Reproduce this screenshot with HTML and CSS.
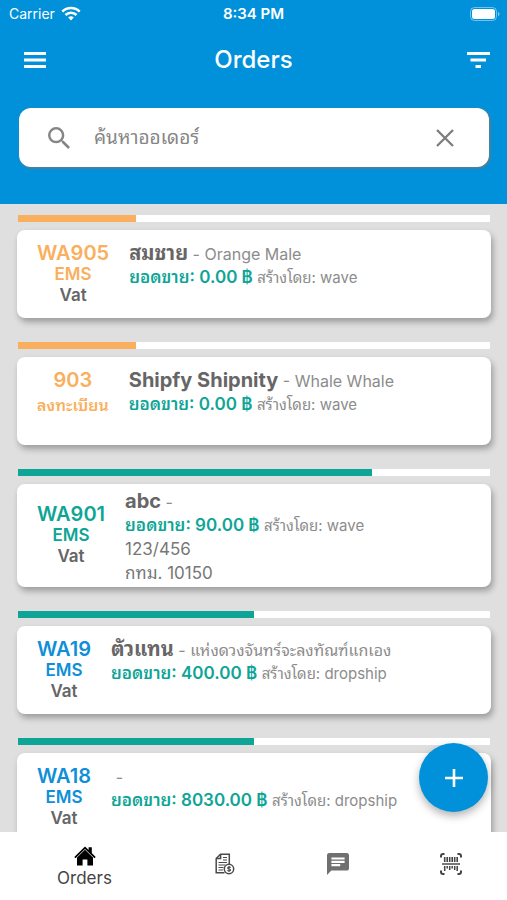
FILE: index.html
```html
<!DOCTYPE html>
<html lang="th">
<head>
<meta charset="utf-8">
<meta name="viewport" content="width=device-width, initial-scale=1">
<title>Orders</title>
<link rel="stylesheet" href="styles.css">
</head>
<body>
<div class="app">
  <header class="header">
    <div class="status">
      <div class="carrier">
        <span>Carrier</span>
        <svg width="20" height="15" viewBox="0 0 20 15" fill="none" stroke="#fff" stroke-width="2.6"><path d="M1.3 5.6a12.3 12.3 0 0 1 17.4 0"/><path d="M4.5 9a7.8 7.8 0 0 1 11 0"/><path d="M10 14.6 7.2 11.6a4 4 0 0 1 5.6 0z" fill="#fff" stroke="none"/></svg>
      </div>
      <span class="time">8:34 PM</span>
      <svg class="battery" width="30" height="14" viewBox="0 0 30 14"><rect x=".5" y=".5" width="26" height="13" rx="4" fill="none" stroke="#fff" stroke-opacity=".45"/><rect x="2" y="2" width="23" height="10" rx="2.5" fill="#fff"/><path d="M28 4.8c2 .8 2 3.600 0 4.400z" fill="#fff" fill-opacity=".5"/></svg>
    </div>
    <div class="bar">
      <button class="icon-btn menu" type="button" aria-label="Menu">
        <svg width="24" height="16" viewBox="0 0 24 16" fill="#fff"><path d="M1 0h22v3H1zM1 6.500h22v3H1zM1 13h22v3H1z"/></svg>
      </button>
      <h1 class="title">Orders</h1>
      <button class="icon-btn filter" type="button" aria-label="Filter">
        <svg width="24" height="16" viewBox="0 0 24 16" fill="#fff"><path d="M1 0h23v3H1zM4.500 6.500h15.500v3H4.500zM9.500 13h5.500v3H9.500z"/></svg>
      </button>
    </div>
    <form class="search" role="search">
      <svg width="22" height="22" viewBox="3 3 17.500 17.500" fill="#858585"><path d="M15.500 14h-.79l-.28-.27A6.470 6.470 0 0 0 16 9.500 6.500 6.500 0 1 0 9.500 16c1.610 0 3.090-.59 4.230-1.570l.27.28v.79l5 4.990L20.490 19l-4.990-5zm-6 0C7.010 14 5 11.990 5 9.500S7.010 5 9.500 5 14 7.010 14 9.500 11.990 14 9.500 14z"/></svg>
      <input class="search-input" type="text" aria-label="ค้นหาออเดอร์" placeholder="ค้นหาออเดอร์">
      <button class="icon-btn" type="reset" aria-label="Clear">
        <svg width="18" height="18" viewBox="0 0 18 18" fill="none" stroke="#7d7d7d" stroke-width="2.300"><path d="M1 1l16 16M17 1 1 17"/></svg>
      </button>
    </form>
  </header>

  <main class="content">
    <div class="list">
      <article class="order orange">
        <div class="track"><div class="fill" style="width:25%"></div></div>
        <div class="card">
          <div class="tag"><div class="code">WA905</div><div class="ship">EMS</div><div class="vat">Vat</div></div>
          <div class="info">
            <div class="line"><span class="name">สมชาย</span> <span class="alias">- Orange Male</span></div>
            <div class="line"><span class="sales">ยอดขาย: 0.00 ฿</span> <span class="by">สร้างโดย: wave</span></div>
          </div>
        </div>
      </article>
      <article class="order orange">
        <div class="track"><div class="fill" style="width:25%"></div></div>
        <div class="card">
          <div class="tag"><div class="code">903</div><div class="ship thai">ลงทะเบียน</div></div>
          <div class="info">
            <div class="line"><span class="name">Shipfy Shipnity</span> <span class="alias">- Whale Whale</span></div>
            <div class="line"><span class="sales">ยอดขาย: 0.00 ฿</span> <span class="by">สร้างโดย: wave</span></div>
          </div>
        </div>
      </article>
      <article class="order green">
        <div class="track"><div class="fill" style="width:75%"></div></div>
        <div class="card">
          <div class="tag"><div class="code">WA901</div><div class="ship">EMS</div><div class="vat">Vat</div></div>
          <div class="info">
            <div class="line"><span class="name">abc</span> <span class="alias">-</span></div>
            <div class="line"><span class="sales">ยอดขาย: 90.00 ฿</span> <span class="by">สร้างโดย: wave</span></div>
            <div class="line address">123/456</div>
            <div class="line address">กทม. 10150</div>
          </div>
        </div>
      </article>
      <article class="order blue">
        <div class="track"><div class="fill" style="width:50%"></div></div>
        <div class="card">
          <div class="tag"><div class="code">WA19</div><div class="ship">EMS</div><div class="vat">Vat</div></div>
          <div class="info">
            <div class="line"><span class="name">ตัวแทน</span> <span class="alias">- แห่งดวงจันทร์จะลงทัณฑ์แกเอง</span></div>
            <div class="line"><span class="sales">ยอดขาย: 400.00 ฿</span> <span class="by">สร้างโดย: dropship</span></div>
          </div>
        </div>
      </article>
      <article class="order blue">
        <div class="track"><div class="fill" style="width:50%"></div></div>
        <div class="card">
          <div class="tag"><div class="code">WA18</div><div class="ship">EMS</div><div class="vat">Vat</div></div>
          <div class="info">
            <div class="line"><span class="name">&nbsp;</span><span class="alias">-</span></div>
            <div class="line"><span class="sales">ยอดขาย: 8030.00 ฿</span> <span class="by">สร้างโดย: dropship</span></div>
          </div>
        </div>
      </article>
    </div>
    <button class="fab" type="button" aria-label="Add order">
      <svg width="18" height="18" viewBox="0 0 18 18" fill="#fff"><path d="M7.700 0h2.600v7.700H18v2.600h-7.700V18H7.700v-7.700H0V7.700h7.700z"/></svg>
    </button>
  </main>

  <nav class="nav">
    <a class="tab active" href="#orders">
      <svg width="22" height="20" viewBox="0 0 22 20" fill="#000"><path d="M11 .5 14.600 4V1.300h3.200v5.800L21.700 11l-1.200 1.200L11 3 1.500 12.200.3 11z"/><path d="M11 3.800 19 11.600v7.900h-5.600v-6H8.600v6H3v-7.900z"/></svg>
      <span>Orders</span>
    </a>
    <a class="tab" href="#bills" aria-label="Bills">
      <svg width="20" height="22" viewBox="0 0 20 22" fill="none" stroke="#4a4a4a" stroke-width="1.500"><path d="M9.500 19.800H1.200V5.500L5.500 1.200h8.800v10"/><path d="M5.600 1.200v4.400H1.200"/><path d="M8 4.500h4M8 7h4M3.500 9.500h8.500M3.500 12h7M3.500 14.500h5M3.500 17h4.500" stroke-width="1.200"/><circle cx="14" cy="16" r="4.700" fill="#fff"/><path d="M15.600 14.600c-.6-1-3-.9-3 .3 0 1.400 3 .8 3 2.200 0 1.200-2.500 1.300-3.200.1M14 12.900v6.200" stroke-width="1.100"/></svg>
    </a>
    <a class="tab" href="#chat" aria-label="Chat">
      <svg width="22" height="22" viewBox="2 2 20 20" fill="#707070"><path d="M20 2H4c-1.100 0-1.990.9-1.990 2L2 22l4-4h14c1.100 0 2-.9 2-2V4c0-1.100-.9-2-2-2zM6 9h12v2H6V9zm8 5H6v-2h8v2zm4-6H6V6h12v2z"/></svg>
    </a>
    <a class="tab" href="#scan" aria-label="Scan">
      <svg width="22" height="22" viewBox="0 0 22 22" fill="none" stroke="#444" stroke-width="2"><path d="M1 4.500V3q0-2 2-2h1.500M17.500 1H19q2 0 2 2v1.500M21 17.500V19q0 2-2 2h-1.500M4.500 21H3q-2 0-2-2v-1.500"/><path d="M2 11h18" stroke="#777"/><path d="M4.700 4v5M7.200 4v5M9.700 4v5M12.200 4v5M14.700 4v5M17.200 4v5" stroke-width="1.600"/><path d="M4.700 13v5M7.200 13v2.500M9.700 13v4M12.200 13v2.500M14.700 13v4M17.200 13v5" stroke-width="1.500"/></svg>
    </a>
  </nav>
</div>
</body>
</html>
```
FILE: styles.css
```css
* { box-sizing: border-box; }

body {
  margin: 0;
  font-family: Inter, Thonburi, "Noto Sans Thai Looped", Loma, Waree, Garuda, "Noto Sans", sans-serif;
  color: #666;
}

button {
  border: 0;
  padding: 0;
  background: none;
  cursor: pointer;
}

svg { display: block; flex: none; }

.app {
  display: flex;
  flex-direction: column;
  height: 100vh;
  overflow: hidden;
}

.header {
  flex: none;
  padding-bottom: 37px;
  background: #0091da;
  color: #fff;
}

.status {
  display: grid;
  grid-template-columns: 1fr auto 1fr;
  align-items: center;
  height: 27px;
  padding: 0 7px;
  font-size: 14px;
}

.carrier {
  display: flex;
  align-items: center;
  gap: 6px;
  padding-left: 2px;
}

.time { font-size: 15px; font-weight: 600; }

.battery { justify-self: end; }

.bar {
  display: grid;
  grid-template-columns: 1fr auto 1fr;
  align-items: center;
  height: 65px;
  padding: 0 17px;
}

.menu { justify-self: start; margin-left: 6px; }
.filter { justify-self: end; }

.title {
  margin: 0;
  font-size: 24px;
  font-weight: 500;
}

.search {
  display: flex;
  align-items: center;
  gap: 24px;
  height: 59px;
  margin: 16px 18px 0 19px;
  padding: 0 35px 0 29px;
  border-radius: 12px;
  background: #fff;
  box-shadow: 1px 1px 3px #777;
}

.search-input {
  flex: 1;
  min-width: 0;
  height: 40px;
  padding: 0;
  border: 0;
  outline: 0;
  background: none;
  font: inherit;
  font-size: 19px;
  color: #666;
}

.search-input::placeholder { color: #858585; opacity: 1; }

.content {
  position: relative;
  flex: 1;
  min-height: 0;
  background: #dfdfdf;
}

.list {
  height: 100%;
  padding: 11px 16px 0 17px;
  overflow-y: auto;
  scrollbar-width: none;
}

.order { margin-bottom: 24px; }

.orange { --tag: #f9af5d; --bar: #f9af5d; }
.green { --tag: #0fa596; --bar: #0fa596; }
.blue { --tag: #0f8fd8; --bar: #0fa596; }

.track {
  height: 7px;
  margin: 0 1px 8px;
  background: #fff;
}

.fill {
  height: 100%;
  background: var(--bar);
}

.card {
  display: flex;
  align-items: center;
  gap: 20px;
  min-height: 88px;
  padding: 5px 20px 2px;
  border-radius: 8px;
  background: #fff;
  box-shadow: 2px 4px 6px rgba(0, 0, 0, 0.3);
}

.tag {
  min-height: 66px;
  font-weight: 600;
  line-height: 21px;
  text-align: center;
  white-space: nowrap;
}

.code { font-size: 20px; color: var(--tag); }
.ship { font-size: 17px; color: var(--tag); }
.thai { font-size: 16px; line-height: 28px; }
.vat { font-size: 17px; }

.info {
  flex: 1;
  min-width: 0;
  min-height: 70px;
  white-space: nowrap;
}

.line {
  height: 24px;
  line-height: 24px;
}

.name { font-size: 20px; font-weight: 700; }
.alias { font-size: 16px; color: #8c8c8c; }
.sales { font-size: 17px; font-weight: 600; color: #0fa596; }
.by { font-size: 15px; color: #8c8c8c; }
.address { font-size: 17px; color: #777; }

.fab {
  position: absolute;
  right: 19px;
  bottom: 20px;
  display: grid;
  place-items: center;
  width: 69px;
  height: 69px;
  border-radius: 50%;
  background: #0091da;
  box-shadow: 0 4px 8px rgba(0, 0, 0, 0.3);
}

.nav {
  display: flex;
  flex: none;
  height: 68px;
  background: #fff;
}

.tab {
  display: flex;
  flex: 2;
  flex-direction: column;
  align-items: center;
  justify-content: center;
  padding-bottom: 4px;
  font-size: 17px;
  line-height: 24px;
  color: #444;
  text-decoration: none;
}

.active {
  flex: 3;
  padding: 4px 0 0;
}
```
